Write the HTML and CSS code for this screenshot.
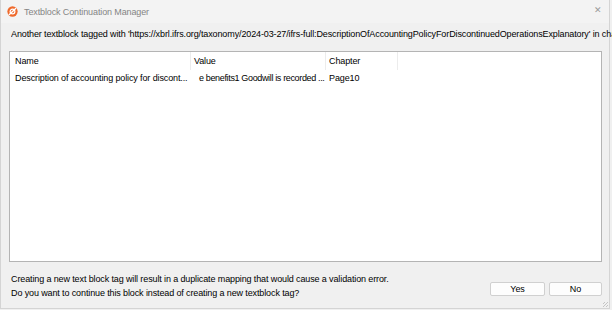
FILE: index.html
```html
<!DOCTYPE html>
<html lang="en">
<head>
    <meta charset="utf-8">
    <title>Textblock Continuation Manager</title>
    <link rel="stylesheet" href="styles.css">
</head>
<body>
    <div class="window">
        <div class="titlebar">
            <svg class="app-icon" width="11" height="11" viewBox="0 0 12 12">
                <circle cx="6" cy="6" r="5.6" fill="#ef6a2c"/>
                <circle cx="6" cy="6" r="2.6" fill="none" stroke="#fff" stroke-width="1.3"/>
                <path d="M2.6 9.2 L9.4 2.8" stroke="#fff" stroke-width="1.5" stroke-linecap="round"/>
            </svg>
            <span class="title">Textblock Continuation Manager</span>
            <span class="close">&#x2715;</span>
        </div>
        <div class="content">
            <p class="intro">Another textblock tagged with 'https://xbrl.ifrs.org/taxonomy/2024-03-27/ifrs-full:DescriptionOfAccountingPolicyForDiscontinuedOperationsExplanatory' in chapter Page10 already exists.</p>
            <div class="list">
                <div class="row head">
                    <div class="col c-name">Name</div>
                    <div class="col c-value">Value</div>
                    <div class="col c-chapter">Chapter</div>
                </div>
                <div class="row">
                    <div class="col c-name">Description of accounting policy for discont...</div>
                    <div class="col c-value">e benefits1 Goodwill is recorded ...</div>
                    <div class="col c-chapter">Page10</div>
                </div>
            </div>
            <div class="footer">
                <p class="question">Creating a new text block tag will result in a duplicate mapping that would cause a validation error.<br>Do you want to continue this block instead of creating a new textblock tag?</p>
                <div class="buttons">
                    <button class="btn btn-yes">Yes</button>
                    <button class="btn btn-no">No</button>
                </div>
            </div>
        </div>
        <div class="grip"></div>
    </div>
</body>
</html>
```

FILE: styles.css
```css
html, body {margin:0; padding:0; background:#f0f0f0; overflow:hidden;}
body {font-family:"Liberation Sans", Arial, sans-serif; font-size:9px; letter-spacing:-0.12px; color:#000;}
.window {width:610px; height:309px; box-sizing:border-box; border:1px solid #d4d4d4; border-top:none; background:#f0f0f0; display:flex; flex-direction:column; position:relative;}
.titlebar {height:23px; flex:none; display:flex; align-items:center; padding-left:6px; background:#f3f3f3; position:relative;}
.app-icon {margin-right:6px; flex:none;}
.title {color:#858585; font-size:9px;}
.close {position:absolute; right:7px; top:5px; color:#9a9a9a; font-size:9px;}
.content {padding:0 7px 0 8px; display:flex; flex-direction:column;}
.intro {margin:4px 0 0 2px; white-space:nowrap; overflow:hidden; height:14px; line-height:14px; margin-right:-10px;}
.list {margin-top:10px; height:211px; box-sizing:border-box; border:1px solid #b4b4b4; background:#fff;}
.row {display:flex; height:16px; line-height:16px;}
.row.head {height:18px; line-height:18px;}
.col {white-space:nowrap; overflow:hidden; box-sizing:border-box; padding-left:5px;}
.head .col {border-right:1px solid #ececec;}
.c-name {width:181px;}
.c-value {width:135px; padding-left:3px;}
.row:not(.head) .c-value {padding-left:8px; letter-spacing:-0.35px;}
.c-chapter {width:72px; padding-left:3px;}
.footer {display:flex; align-items:flex-start; margin-top:10px;}
.question {margin:0 0 0 2px; line-height:14px; flex:1;}
.buttons {display:flex; gap:4px; margin-top:10px;}
.btn {height:14px; padding:0; font:inherit; letter-spacing:inherit; line-height:12px; background:#fdfdfd; border:1px solid #d0d0d0; border-radius:2px; color:#000;}
.btn-yes {width:55px;}
.btn-no {width:53px;}
.grip {position:absolute; right:1px; bottom:1px; width:5px; height:5px; background:repeating-linear-gradient(135deg, transparent 0 1px, #c4c4c4 1px 2px);}
```
